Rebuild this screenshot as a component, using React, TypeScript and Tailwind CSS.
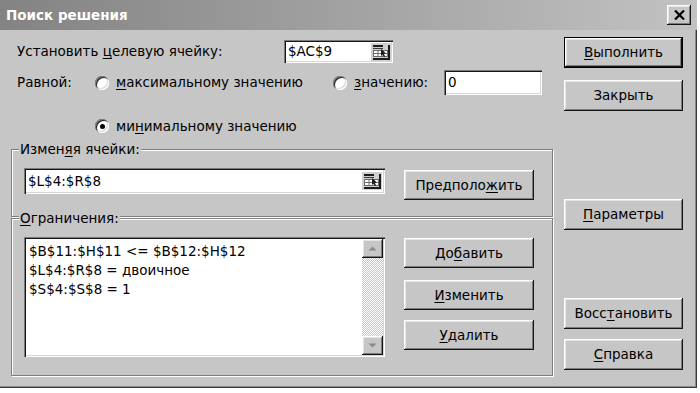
import React from "react";

const raised =
  "shadow-[inset_-1px_-1px_#151515,inset_1px_1px_#ffffff,inset_-2px_-2px_#7c7c7c,inset_2px_2px_#e4e4e4]";
const sunken =
  "shadow-[inset_1px_1px_#7a7a7a,inset_2px_2px_#161616,inset_-1px_-1px_#ffffff,inset_-2px_-2px_#d6d6d6]";

function U({ children }: { children: React.ReactNode }) {
  return <span className="underline decoration-1 underline-offset-[2px]">{children}</span>;
}

function Btn({
  children,
  className = "",
  primary = false,
}: {
  children: React.ReactNode;
  className?: string;
  primary?: boolean;
}) {
  return (
    <div
      className={`flex items-center justify-center bg-[#c6c6c6] text-black ${
        primary ? "border border-black" : ""
      } ${raised} ${className}`}
    >
      {children}
    </div>
  );
}

function Radio({ checked = false }: { checked?: boolean }) {
  return (
    <span className="flex h-[14px] w-[14px] shrink-0 items-center justify-center rounded-full bg-white shadow-[inset_1px_1px_#858585,inset_2px_2px_#2a2a2a,inset_-1px_-1px_#ffffff,inset_-2px_-2px_#d8d8d8]">
      {checked && <span className="h-[5px] w-[5px] rounded-full bg-black" />}
    </span>
  );
}

function RefIcon() {
  return (
    <svg width="20" height="18" viewBox="0 0 20 18" className="shrink-0">
      <rect x="0" y="0" width="20" height="18" fill="#cfcfcf" />
      <rect x="2" y="2" width="10" height="2" fill="#1c1c1c" />
      <rect x="2" y="5" width="10" height="1" fill="#3a3a3a" />
      <rect x="2.5" y="7.5" width="14" height="6" fill="#ffffff" stroke="#6a6a6a" strokeWidth="1" />
      <line x1="7" y1="7.5" x2="7" y2="13.5" stroke="#6a6a6a" strokeWidth="1" />
      <line x1="12" y1="7.5" x2="12" y2="13.5" stroke="#6a6a6a" strokeWidth="1" />
      <line x1="2.5" y1="10.5" x2="16.5" y2="10.5" stroke="#6a6a6a" strokeWidth="1" />
      <path d="M10 6 L10 13 L11.6 11.4 L13 14 L14.2 13.4 L12.8 10.8 L15 10.6 Z" fill="#1c1c1c" />
      <rect x="2" y="15" width="15" height="2" fill="#1c1c1c" />
      <rect x="17" y="2" width="2" height="15" fill="#1c1c1c" />
    </svg>
  );
}

function Group({
  legend,
  className = "",
  children,
}: {
  legend: React.ReactNode;
  className?: string;
  children: React.ReactNode;
}) {
  return (
    <div
      className={`relative border border-[#7e7e7e] shadow-[inset_1px_1px_#ffffff,1px_1px_#ffffff] ${className}`}
    >
      <span className="absolute left-[7px] top-[-9px] bg-[#c6c6c6] px-[1px] leading-[16px]">{legend}</span>
      {children}
    </div>
  );
}

function ScrollArrow({ up }: { up: boolean }) {
  return (
    <div className={`flex h-[19px] w-[21px] items-center justify-center bg-[#c6c6c6] ${raised}`}>
      <svg width="9" height="5" viewBox="0 0 9 5">
        {up ? (
          <path d="M0.5 4.5 L4.5 0.5 L8.5 4.5 Z" fill="#8a8a8a" />
        ) : (
          <path d="M0.5 0.5 L4.5 4.5 L8.5 0.5 Z" fill="#8a8a8a" />
        )}
      </svg>
    </div>
  );
}

export default function App() {
  return (
    <div className="h-[393px] w-[700px] overflow-hidden bg-white font-['DejaVu_Sans',sans-serif] text-[13.5px] text-black">
      <div className="flex h-[388px] w-[697px] flex-col bg-[#c6c6c6] shadow-[inset_-1px_-1px_#3a3a3a,inset_-2px_-2px_#8a8a8a]">
        {/* title bar */}
        <div className="flex h-[30px] items-center justify-between bg-gradient-to-r from-[#838383] to-[#c2c2c2] pl-[6px] pr-[6px]">
          <span className="text-[13.5px] font-bold text-white">Поиск решения</span>
          <div className={`flex h-[20px] w-[24px] items-center justify-center bg-[#c6c6c6] ${raised}`}>
            <svg width="11" height="10" viewBox="0 0 11 10">
              <path d="M1 0.5 L10 9.5 M10 0.5 L1 9.5" stroke="#000" strokeWidth="2.2" />
            </svg>
          </div>
        </div>

        <div className="flex pl-[11px]">
          {/* left column */}
          <div className="flex w-[542px] flex-col">
            <div className="mt-[10px] flex h-[23px] items-center">
              <span className="w-[273px] pl-[6px]">
                Установить <U>ц</U>елевую ячейку:
              </span>
              <div className={`flex h-[23px] w-[109px] items-center justify-between bg-white pl-[4px] pr-[2px] ${sunken}`}>
                <span>$AC$9</span>
                <RefIcon />
              </div>
            </div>

            <div className="mt-[7px] flex h-[25px] items-center">
              <span className="w-[84px] pl-[6px]">Равной:</span>
              <div className="flex w-[238px] items-center gap-[7px]">
                <Radio />
                <span>
                  <U>м</U>аксимальному значению
                </span>
              </div>
              <div className="flex w-[111px] items-center gap-[7px]">
                <Radio />
                <span>
                  <U>з</U>начению:
                </span>
              </div>
              <div className={`flex h-[25px] w-[98px] items-center bg-white pl-[4px] ${sunken}`}>0</div>
            </div>

            <div className="mt-[22px] flex h-[18px] items-center gap-[7px] pl-[84px]">
              <Radio checked />
              <span>
                ми<U>н</U>имальному значению
              </span>
            </div>

            <Group
              className="mt-[14px] h-[68px]"
              legend={
                <>
                  Измен<U>я</U>я ячейки:
                </>
              }
            >
              <div className="flex pl-[12px] pt-[18px]">
                <div className={`flex h-[26px] w-[361px] items-center justify-between bg-white pl-[4px] pr-[3px] ${sunken}`}>
                  <span>$L$4:$R$8</span>
                  <RefIcon />
                </div>
                <Btn className="ml-[19px] mt-[2px] h-[30px] w-[130px]">
                  Предполо<U>ж</U>ить
                </Btn>
              </div>
            </Group>

            <Group
              className="mt-[1px] h-[158px]"
              legend={
                <>
                  <U>О</U>граничения:
                </>
              }
            >
              <div className="flex pl-[12px] pt-[18px]">
                <div className={`flex h-[120px] w-[361px] bg-white p-[2px] ${sunken}`}>
                  <div className="flex flex-1 flex-col pl-[3px] pt-[3px] leading-[19px]">
                    <span>$B$11:$H$11 &lt;= $B$12:$H$12</span>
                    <span>$L$4:$R$8 = двоичное</span>
                    <span>$S$4:$S$8 = 1</span>
                  </div>
                  <div className="flex w-[21px] flex-col justify-between bg-[repeating-conic-gradient(#ffffff_0%_25%,#c6c6c6_0%_50%)] bg-[length:2px_2px]">
                    <ScrollArrow up />
                    <ScrollArrow up={false} />
                  </div>
                </div>
                <div className="ml-[19px] mt-[1px] flex flex-col">
                  <Btn className="h-[30px] w-[130px]">
                    До<U>б</U>авить
                  </Btn>
                  <Btn className="mt-[12px] h-[30px] w-[130px]">
                    <U>И</U>зменить
                  </Btn>
                  <Btn className="mt-[10px] h-[30px] w-[130px]">
                    <U>У</U>далить
                  </Btn>
                </div>
              </div>
            </Group>
          </div>

          {/* right column */}
          <div className="ml-[11px] flex flex-col pt-[7px]">
            <Btn primary className="h-[31px] w-[119px]">
              <U>В</U>ыполнить
            </Btn>
            <Btn className="mt-[12px] h-[31px] w-[119px]">Закрыть</Btn>
            <Btn className="mt-[88px] h-[31px] w-[119px]">
              <U>П</U>араметры
            </Btn>
            <Btn className="mt-[68px] h-[31px] w-[119px]">
              Восс<U>т</U>ановить
            </Btn>
            <Btn className="mt-[10px] h-[31px] w-[119px]">
              <U>С</U>правка
            </Btn>
          </div>
        </div>
      </div>
    </div>
  );
}
